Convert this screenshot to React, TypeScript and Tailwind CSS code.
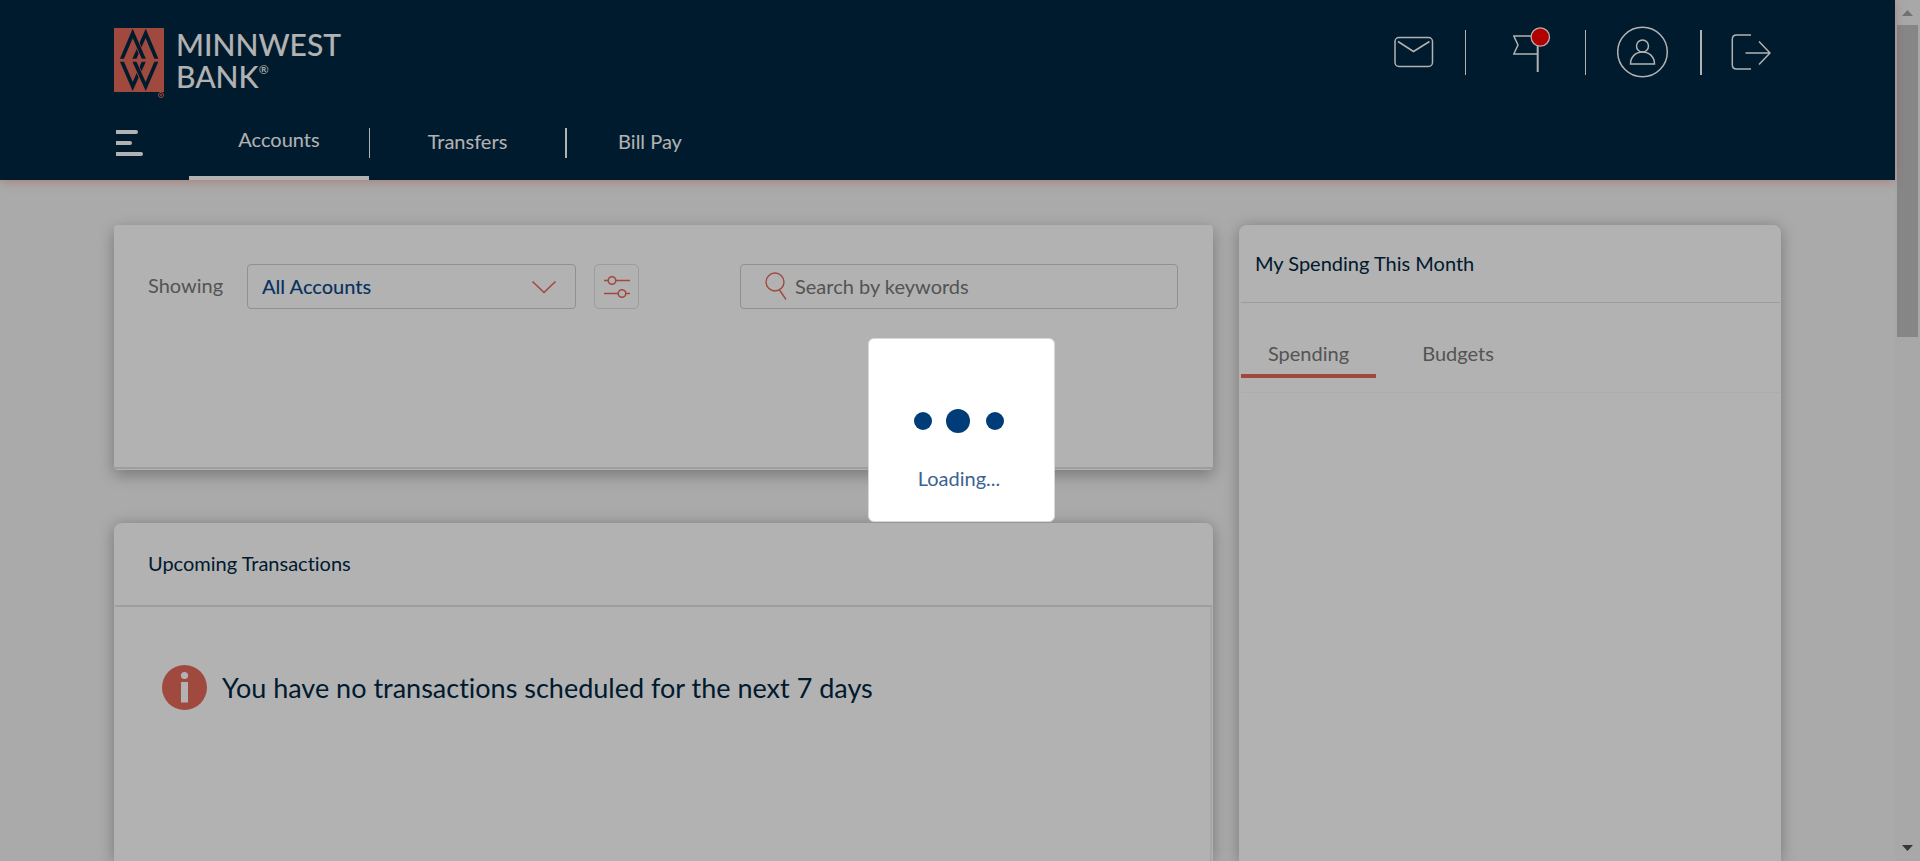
import type { ReactNode } from 'react';

function LogoMark() {
  return (
    <svg viewBox="0 0 50 70" className="h-[70px] w-[50px]" aria-hidden="true">
      <defs>
        <clipPath id="upper">
          <rect width="50" height="30.700" />
        </clipPath>
        <clipPath id="lower">
          <rect y="33.700" width="50" height="30.300" />
        </clipPath>
      </defs>
      <rect width="50" height="64" fill="#e56a5b" />
      <g fill="none" stroke="#002842" strokeWidth="3.700" strokeMiterlimit="10" clipPath="url(#upper)">
        <path d="M18.900 34.100L31.700 5.500L43.800 34.100" />
        <path d="M21.500 12L28.300 27.500" stroke="#e56a5b" strokeWidth="5.200" />
        <path d="M6.500 34.100L18.700 5.500L31.300 34.100" />
      </g>
      <g fill="none" stroke="#002842" strokeWidth="3.700" strokeMiterlimit="10" clipPath="url(#lower)">
        <path d="M6.500 30.300L18.700 58.500L31.300 30.300" />
        <path d="M22 37L28.500 52" stroke="#e56a5b" strokeWidth="5.200" />
        <path d="M18.900 30.300L31.700 58.500L43.800 30.300" />
      </g>
      <circle cx="47" cy="67" r="2.500" fill="none" stroke="#e56a5b" strokeWidth="1" />
      <path d="M46 66l2 2m0-2l-2 2" stroke="#e56a5b" strokeWidth="0.700" />
    </svg>
  );
}

function IconButton({ label, children, className }: { label: string; children: ReactNode; className: string }) {
  return (
    <button type="button" aria-label={label} className={className}>
      {children}
    </button>
  );
}

function HeaderActions() {
  return (
    <div className="mr-2.5 flex h-[52px] items-center text-white">
      <IconButton label="Messages" className="mr-[31px]">
        <svg viewBox="0 0 40 32" className="h-8 w-10" fill="none" stroke="currentColor" strokeWidth="1.5">
          <rect x="1" y="1.500" width="37.500" height="29" rx="4" />
          <path d="M4 5.500L19.500 15.500L35.500 5.500" />
        </svg>
      </IconButton>
      <span className="h-[45px] w-px bg-white" />
      <IconButton label="Notifications" className="mr-8 ml-[47px]">
        <svg viewBox="0 0 40 52" className="h-[52px] w-10" fill="none" stroke="currentColor" strokeWidth="1.5">
          <path d="M25 10H0.800L5 19L0.800 28H24.700" />
          <path d="M24.700 10V46" strokeWidth="2" />
          <circle cx="27.300" cy="11" r="9.200" fill="#ff0000" strokeWidth="1.300" />
        </svg>
      </IconButton>
      <span className="h-[45px] w-px bg-white" />
      <IconButton label="Profile" className="mx-[31px]">
        <svg viewBox="0 0 52 52" className="size-[52px]" fill="none" stroke="currentColor" strokeWidth="1.5">
          <circle cx="25.500" cy="26" r="24.800" />
          <circle cx="25.500" cy="20" r="6" />
          <path d="M13.500 38C13.500 31 18.500 26 25.500 26S37.500 31 37.500 38Z" />
        </svg>
      </IconButton>
      <span className="h-[45px] w-0.5 bg-white" />
      <IconButton label="Log out" className="ml-[29px]">
        <svg viewBox="0 0 40 36" className="h-9 w-10" fill="none" stroke="currentColor" strokeWidth="1.5">
          <path d="M20 1H5.500Q1.300 1 1.300 5.500V30.500Q1.300 35 5.500 35H20" />
          <path d="M14.500 19H38.500M28 7.500L39 19L28 30.500" />
        </svg>
      </IconButton>
    </div>
  );
}

function Header() {
  return (
    <header className="relative bg-[#002842] px-[114px] text-white shadow-[0_2px_10px_rgba(229,106,91,0.4)]">
      <div className="flex h-[105px] items-start justify-between pt-7">
        <a href="#home" className="flex gap-3">
          <LogoMark />
          <span className="flex flex-col text-[30px] leading-8 font-medium">
            <span>MINNWEST</span>
            <span className="flex items-start">
              BANK<span className="pt-1 text-xs leading-3">®</span>
            </span>
          </span>
        </a>
        <div className="-mt-0.5">
          <HeaderActions />
        </div>
      </div>
      <nav className="flex h-[75px] text-xl">
        <button type="button" aria-label="Menu" className="mr-[46px] flex w-[29px] flex-col items-start gap-[7px] pt-[25px] pl-0.5">
          <span className="h-1 w-[22px] rounded-r-sm bg-white" />
          <span className="h-1 w-4 rounded-r-sm bg-white" />
          <span className="h-1 w-[27px] rounded-r-sm bg-white" />
        </button>
        <a href="#accounts" className="flex w-[180px] items-center justify-center border-b-4 border-white pb-1">
          Accounts
        </a>
        <span className="mt-[23px] h-[30px] w-px bg-white" />
        <a href="#transfers" className="flex w-[195px] items-center justify-center pb-1">
          Transfers
        </a>
        <span className="mt-[23px] h-[30px] w-0.5 bg-white" />
        <a href="#billpay" className="flex w-[166px] items-center justify-center pb-1">
          Bill Pay
        </a>
      </nav>
    </header>
  );
}

function AccountsCard() {
  return (
    <section className="rounded-[4px] bg-white shadow-[0_5px_16px_rgba(0,0,0,0.3)]">
      <div className="flex h-[244px] items-start border-b-2 border-[#e2e2e2] pr-[35px] pl-[34px] pt-[39px] text-xl text-[#797979]">
        <label htmlFor="account" className="w-[99px] leading-[43px]">
          Showing
        </label>
        <div className="relative w-[329px]">
          <select
            id="account"
            className="h-[45px] w-full appearance-none rounded-[4px] border border-[#cfcfcf] bg-white px-3.5 pb-0.5 font-medium text-[#0f4a8a]"
          >
            <option>All Accounts</option>
          </select>
          <svg viewBox="0 0 26 14" className="pointer-events-none absolute top-4 right-[19px] h-3.5 w-[26px]" fill="none" stroke="#e56a5b" strokeWidth="1.6">
            <path d="M1.500 1.500L13 12.500L24.500 1.500" />
          </svg>
        </div>
        <button type="button" aria-label="Filter accounts" className="ml-[18px] flex size-[45px] items-center justify-center rounded-[5px] border border-[#e0e0e0]">
          <svg viewBox="0 0 26 24" className="h-6 w-[26px]" fill="none" stroke="#e56a5b" strokeWidth="1.6">
            <path d="M0 5.500H4M12 5.500H26M0 18.500H14M22 18.500H26" />
            <circle cx="8" cy="5.500" r="3.800" />
            <circle cx="18" cy="18.500" r="3.800" />
          </svg>
        </button>
        <label className="ml-auto flex h-[45px] w-[438px] items-center rounded-[4px] border border-[#cfcfcf] pb-0.5 pl-6">
          <svg viewBox="0 0 22 28" className="mr-2 h-7 w-[22px]" fill="none" stroke="#e56a5b" strokeWidth="1.4">
            <circle cx="10" cy="10" r="9" />
            <path d="M14.500 18L21 27.500" />
          </svg>
          <input
            type="text"
            aria-label="Search by keywords"
            placeholder="Search by keywords"
            className="min-w-0 flex-1 outline-none placeholder:text-[#797979]"
          />
        </label>
      </div>
      <div className="h-px" />
    </section>
  );
}

function UpcomingCard() {
  return (
    <section className="flex flex-1 flex-col rounded-t-lg bg-white px-px text-[#002842] shadow-[0_2px_16px_rgba(0,0,0,0.3)]">
      <h2 className="h-[84px] border-b-2 border-[#e2e2e2] px-[33px] text-xl leading-[81px]">Upcoming Transactions</h2>
      <div className="flex-1 border-r-2 border-[#efefef] px-[47px] pt-[58px]">
        <p className="flex items-center gap-[15px] text-[27px] leading-[45px]">
          <svg viewBox="0 0 45 45" className="size-[45px]" aria-hidden="true">
            <circle cx="22.500" cy="22.500" r="22.500" fill="#e56a5b" />
            <circle cx="22.500" cy="10.500" r="3.600" fill="#fff" />
            <rect x="19" y="17" width="7" height="20.500" fill="#fff" />
          </svg>
          You have no transactions scheduled for the next 7 days
        </p>
      </div>
    </section>
  );
}

function SpendingCard() {
  return (
    <aside className="w-[542px] rounded-t-lg bg-white pr-px pl-0.5 text-xl shadow-[0_2px_16px_rgba(0,0,0,0.3)]">
      <h2 className="h-[78px] border-b border-[#e0e0e0] px-3.5 leading-[77px] text-[#002842]">My Spending This Month</h2>
      <div className="flex h-[90px] items-start border-b border-[#f8f8f8] pt-7 text-[#797979]">
        <button type="button" className="h-[47px] w-[135px] border-b-4 border-[#e56a5b]">
          Spending
        </button>
        <button type="button" className="ml-[23px] h-[47px] w-[118px] border-b-4 border-transparent">
          Budgets
        </button>
      </div>
    </aside>
  );
}

function ScrollRail() {
  return (
    <div className="flex w-[25px] flex-col items-center bg-[#f1f1f1]" aria-hidden="true">
      <svg viewBox="0 0 25 25" className="size-[25px]">
        <path d="M7 16L12.500 10L18 16Z" fill="#a3a3a3" />
      </svg>
      <div className="h-[312px] w-[21px] bg-[#c1c1c1]" />
      <svg viewBox="0 0 25 25" className="mt-auto size-[25px]">
        <path d="M7 9L12.500 15L18 9Z" fill="#505050" />
      </svg>
    </div>
  );
}

function LoadingDialog() {
  return (
    <div className="fixed inset-0 flex items-center justify-center bg-black/30 pb-px pl-0.5">
      <div role="status" className="flex h-[184px] w-[187px] flex-col items-center rounded-md border border-[#d8d8d8] bg-white pt-[69px] pr-1">
        <svg viewBox="0 0 92 26" className="h-[26px] w-[92px]" fill="#003d78" aria-hidden="true">
          <circle cx="10" cy="13" r="9" />
          <circle cx="45" cy="13" r="12" />
          <circle cx="82" cy="13" r="9" />
        </svg>
        <p className="mt-[30px] text-xl leading-7 text-[#3c6490]">Loading...</p>
      </div>
    </div>
  );
}

export default function App() {
  return (
    <div className="flex h-screen overflow-hidden font-[Lato,sans-serif] [font-variant-ligatures:none]">
      <div className="flex min-w-0 flex-1 flex-col bg-[#f4f4f4]">
        <Header />
        <main className="flex flex-1 gap-[26px] px-[114px] pt-[45px]">
          <div className="flex min-w-0 flex-1 flex-col gap-[53px]">
            <AccountsCard />
            <UpcomingCard />
          </div>
          <SpendingCard />
        </main>
      </div>
      <ScrollRail />
      <LoadingDialog />
    </div>
  );
}
